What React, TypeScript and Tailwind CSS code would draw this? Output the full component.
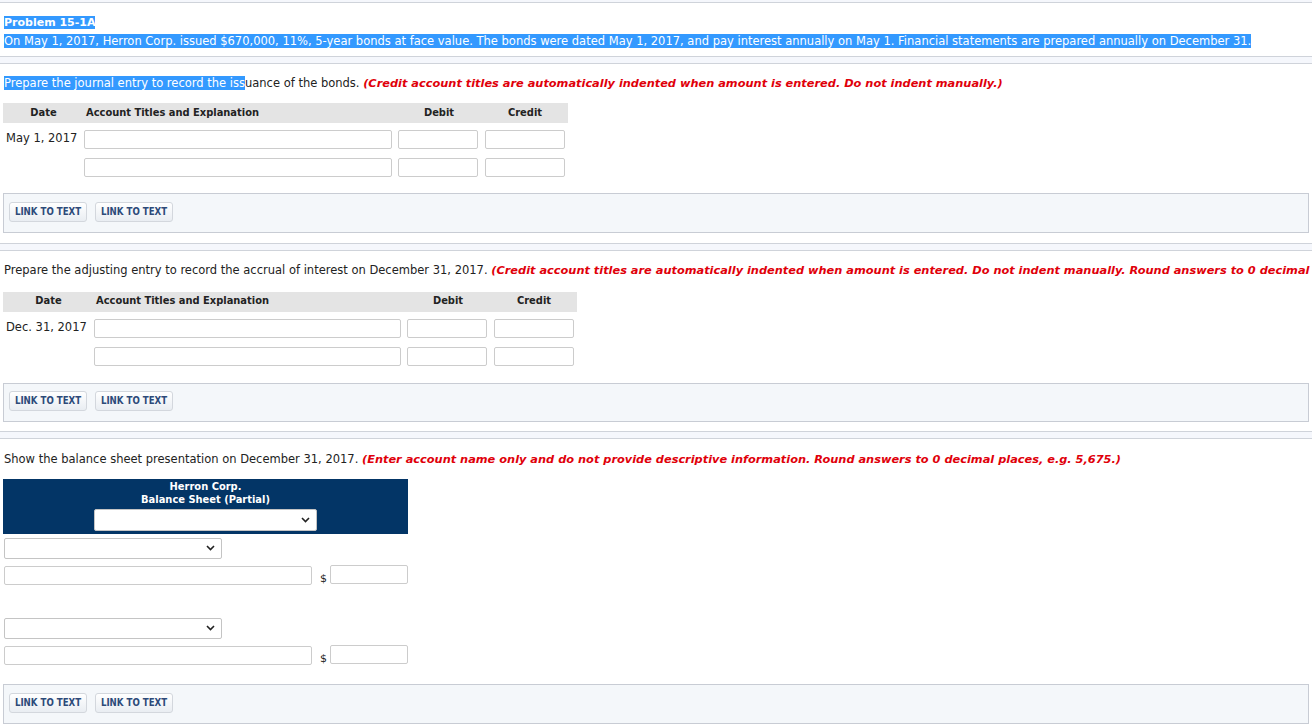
import React from 'react';

const body = { fontFamily: '"DejaVu Sans", Verdana, sans-serif' };
const narrow = { fontFamily: '"DejaVu Sans Condensed", "DejaVu Sans", Tahoma, sans-serif' };

function Divider() {
  return <div className="h-[8px] border-t border-b border-[#cfd3da] bg-[#f5f7fc]" />;
}

function Field({ w }: { w: string }) {
  return <div className={`h-[19px] ${w} border border-[#cccccc] rounded-[2px] bg-white shrink-0`} />;
}

function Select({ w, h = 'h-[21px]' }: { w: string; h?: string }) {
  return (
    <div className={`${h} ${w} border border-[#c4c4c4] rounded-[2px] bg-white flex items-center justify-end pr-[6px]`}>
      <svg width="9" height="6" viewBox="0 0 9 6" fill="none">
        <path d="M1 1l3.5 3.5L8 1" stroke="#222" strokeWidth="1.6" />
      </svg>
    </div>
  );
}

function LinkPanel({ h = 'h-[40px]' }: { h?: string }) {
  return (
    <div className={`mx-[3px] ${h} border border-[#c8ccd4] bg-[#f4f7fa] flex items-center gap-[8px] pl-[5px] pb-[2px]`} style={narrow}>
      {[0, 1].map(i => (
        <div
          key={i}
          className="h-[20px] w-[78px] justify-center flex items-center border border-[#d3d7dd] rounded-[3px] bg-gradient-to-b from-white to-[#e9edf2] text-[9.6px] font-bold text-[#2d4a79]"
        >
          LINK TO TEXT
        </div>
      ))}
    </div>
  );
}

function JournalTable({ dateW, date, fieldW, tableW, pb }: { dateW: string; date: string; fieldW: string; tableW: string; pb: string }) {
  return (
    <div className={`ml-[3px] ${tableW}`}>
      <div className="flex h-[20px] items-center bg-[#e4e4e4] font-bold text-[11px] text-[#222]" style={narrow}>
        <div className={`${dateW} text-center`}>Date</div>
        <div className="flex-1 pl-[2px]">Account Titles and Explanation</div>
        <div className="w-[80px] mr-[6px] text-center">Debit</div>
        <div className="w-[80px] mr-[3px] text-center">Credit</div>
      </div>
      <div className={`flex flex-col gap-[9px] pt-[7px] ${pb}`}>
        {[0, 1].map(i => (
          <div key={i} className="flex items-start">
            <div className={`${dateW} pl-[3px] text-[11.5px] whitespace-nowrap`}>{i === 0 ? date : ''}</div>
            <div className="flex gap-[6px]">
              <Field w={fieldW} />
              <Field w="w-[80px]" />
              <div className="ml-[1px]">
                <Field w="w-[80px]" />
              </div>
            </div>
          </div>
        ))}
      </div>
    </div>
  );
}

const red = 'text-[#e0000a] italic font-bold text-[11.35px]';

export default function App() {
  return (
    <div className="w-[1312px] h-[724px] overflow-hidden bg-white text-[#222] text-[11.5px]" style={body}>
      <div className="h-[3px] bg-[#f5f7fc] border-b border-[#cfd3da]" />
      <div className="px-[4px] pt-[10px] pb-[5px] leading-[19px]">
        <div>
          <span className="bg-[#3399ff] text-white font-bold text-[11px]">Problem 15-1A</span>
        </div>
        <div>
          <span className="bg-[#3399ff] text-white text-[11.5px]">
            On May 1, 2017, Herron Corp. issued $670,000, 11%, 5-year bonds at face value. The bonds were dated May 1, 2017, and pay interest annually on May 1. Financial statements are prepared annually on December 31.
          </span>
        </div>
      </div>
      <Divider />

      <div className="px-[4px] pt-[11px] pb-[11px] whitespace-nowrap">
        <span className="bg-[#3399ff] text-white">Prepare the journal entry to record the iss</span>uance of the bonds.{' '}
        <span className={red}>(Credit account titles are automatically indented when amount is entered. Do not indent manually.)</span>
      </div>
      <JournalTable dateW="w-[81px]" date="May 1, 2017" fieldW="w-[308px]" tableW="w-[565px]" pb="pb-[16px]" />
      <LinkPanel />
      <div className="h-[10px]" />
      <Divider />

      <div className="px-[4px] pt-[11px] pb-[12px] whitespace-nowrap">
        Prepare the adjusting entry to record the accrual of interest on December 31, 2017.{' '}
        <span className={red}>(Credit account titles are automatically indented when amount is entered. Do not indent manually. Round answers to 0 decimal</span>
      </div>
      <JournalTable dateW="w-[91px]" date="Dec. 31, 2017" fieldW="w-[307px]" tableW="w-[574px]" pb="pb-[17px]" />
      <LinkPanel h="h-[39px]" />
      <div className="h-[9px]" />
      <Divider />

      <div className="px-[4px] pt-[12px] pb-[11px] whitespace-nowrap">
        Show the balance sheet presentation on December 31, 2017.{' '}
        <span className={red}>(Enter account name only and do not provide descriptive information. Round answers to 0 decimal places, e.g. 5,675.)</span>
      </div>
      <div className="ml-[3px] w-[405px] h-[55px] bg-[#033566] text-white font-bold text-[11px] leading-[13px] flex flex-col items-center pt-[1px]" style={narrow}>
        <div>Herron Corp.</div>
        <div>Balance Sheet (Partial)</div>
        <div className="mt-[3px]">
          <Select w="w-[223px]" h="h-[22px]" />
        </div>
      </div>
      <div className="pl-[4px] pt-[4px]">
        {[0, 1].map(i => (
          <div key={i} className={i === 1 ? 'mt-[33px]' : ''}>
            <Select w="w-[218px]" />
            <div className="flex items-end mt-[7px]">
              <Field w="w-[308px]" />
              <span className="ml-[8px] w-[8px] text-[11px] leading-[13px]">$</span>
              <div className="ml-[2px] self-start -mt-[1px]">
                <Field w="w-[78px]" />
              </div>
            </div>
          </div>
        ))}
      </div>
      <div className="h-[19px]" />
      <LinkPanel />
    </div>
  );
}
